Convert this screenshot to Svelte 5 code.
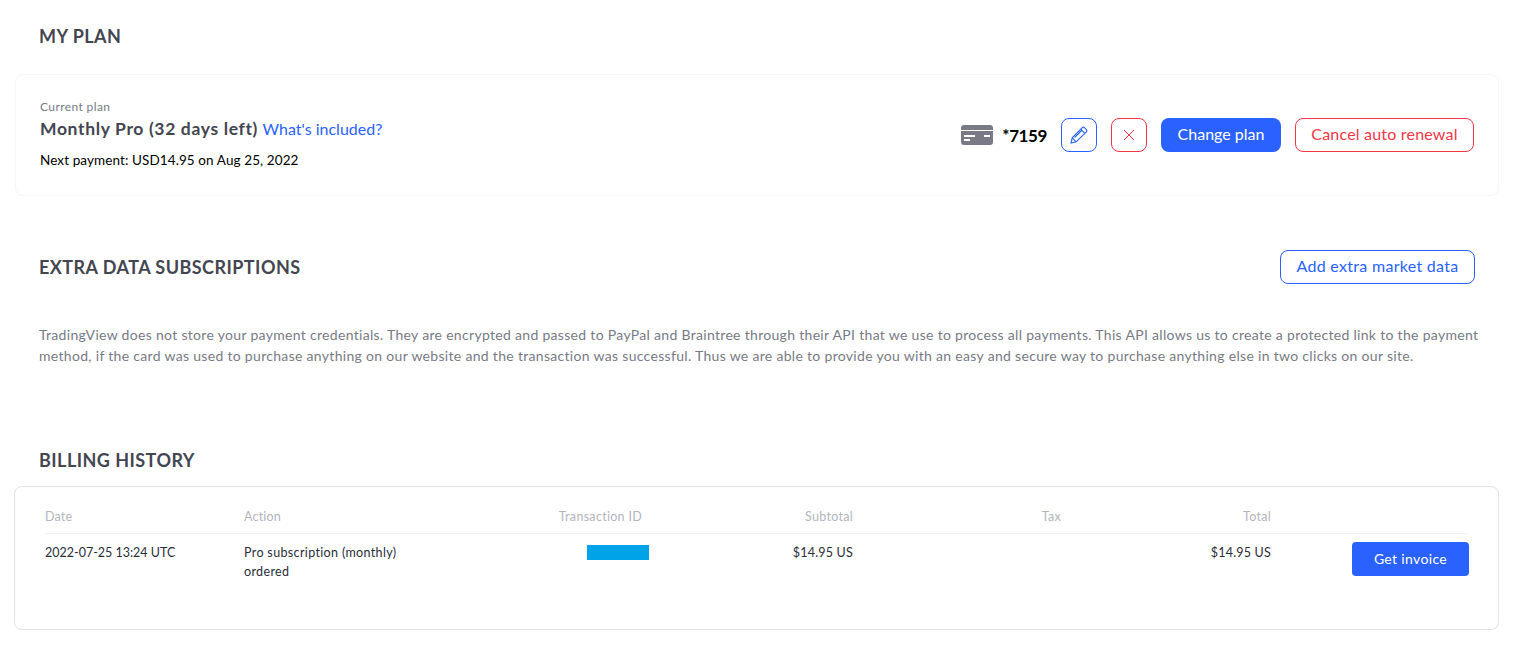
<script>
	const rows = [
		{
			date: '2022-07-25 13:24 UTC',
			action: 'Pro subscription (monthly) ordered',
			subtotal: '$14.95 US',
			tax: '',
			total: '$14.95 US'
		}
	];
</script>

<div class="page">
	<section class="plan">
		<h2 class="title plan-title">MY PLAN</h2>
		<div class="plan-card">
			<div class="plan-info">
				<p class="plan-label">Current plan</p>
				<p class="plan-name"><strong>Monthly Pro (32 days left)</strong> <a href="#included">What's included?</a></p>
				<p class="plan-next">Next payment: USD14.95 on Aug 25, 2022</p>
			</div>
			<div class="plan-actions">
				<svg class="card-icon" width="32" height="20" viewBox="0 0 32 20" aria-hidden="true">
					<path fill="#787b86" d="M3 0h26a3 3 0 0 1 3 3v2H0V3a3 3 0 0 1 3-3z"/>
					<path fill="#787b86" fill-rule="evenodd" d="M0 6h32v11a3 3 0 0 1-3 3H3a3 3 0 0 1-3-3zm3 4v2h11v-2zm20 0v2h6v-2zM3 14v2h6v-2z"/>
				</svg>
				<span class="card-number">*7159</span>
				<button class="square blue" aria-label="Edit">
					<svg width="20" height="20" viewBox="0 0 20 20" fill="none" stroke="currentColor" stroke-width="1.100" aria-hidden="true">
						<path d="M2 18l1.200-5.200L13.300 2.700a1.500 1.500 0 0 1 2.100 0l2 2a1.500 1.500 0 0 1 0 2.100L7.200 16.800z"/>
						<path d="M3.200 12.800l4 4M11.800 4.200l4.100 4.100M5.500 12.500l7.500-7.500"/>
					</svg>
				</button>
				<button class="square red" aria-label="Remove">
					<svg width="12" height="12" viewBox="0 0 12 12" fill="none" stroke="currentColor" stroke-width="1" aria-hidden="true">
						<path d="M1 1l10 10M11 1L1 11"/>
					</svg>
				</button>
				<button class="btn solid change">Change plan</button>
				<button class="btn outline-red cancel">Cancel auto renewal</button>
			</div>
		</div>
	</section>

	<section class="extra">
		<div class="extra-head">
			<h2 class="title">EXTRA DATA SUBSCRIPTIONS</h2>
			<button class="btn outline-blue add">Add extra market data</button>
		</div>
		<p class="note">TradingView does not store your payment credentials. They are encrypted and passed to PayPal and Braintree through their API that we use to process all payments. This API allows us to create a protected link to the payment method, if the card was used to purchase anything on our website and the transaction was successful. Thus we are able to provide you with an easy and secure way to purchase anything else in two clicks on our site.</p>
	</section>

	<section class="billing">
		<h2 class="title">BILLING HISTORY</h2>
		<div class="billing-card">
			<div class="grid head">
				<div>Date</div>
				<div>Action</div>
				<div class="right">Transaction ID</div>
				<div class="right">Subtotal</div>
				<div class="right">Tax</div>
				<div class="right">Total</div>
				<div></div>
			</div>
			{#each rows as row}
				<div class="grid row">
					<div class="date">{row.date}</div>
					<div class="action">{row.action}</div>
					<div class="right"><span class="redacted"></span></div>
					<div class="right">{row.subtotal}</div>
					<div class="right">{row.tax}</div>
					<div class="right">{row.total}</div>
					<div class="right"><button class="btn solid invoice">Get invoice</button></div>
				</div>
			{/each}
		</div>
	</section>
</div>

<style>
	:global(body) {
		background: #fff;
	}

	.page {
		width: 1525px;
		height: 651px;
		overflow: hidden;
		box-sizing: border-box;
		padding: 0 26px 0 14px;
		font-family: "Lato", "Open Sans", sans-serif;
		color: #131722;
	}

	h2,
	p {
		margin: 0;
	}

	.title {
		font-size: 18px;
		line-height: 24px;
		font-weight: 700;
		letter-spacing: 0.45px;
		color: #434651;
		padding-left: 25px;
	}

	.plan {
		padding-top: 24px;
	}

	.plan-title {
		margin-bottom: 26px;
	}

	.plan-card {
		margin-left: 1px;
		height: 122px;
		box-sizing: border-box;
		border: 1px solid #f5f5fa;
		border-radius: 8px;
		padding: 0 24px;
		display: flex;
		align-items: center;
		justify-content: space-between;
	}

	.plan-info {
		padding-top: 2px;
	}

	.plan-label {
		font-size: 12px;
		line-height: 16px;
		letter-spacing: 0.4px;
		color: #787b86;
		margin: -3px 0 2px;
	}

	.plan-name {
		font-size: 17.500px;
		line-height: 24px;
		color: #2962ff;
	}

	.plan-name strong {
		color: #434651;
		letter-spacing: 0.65px;
	}

	.plan-name a {
		color: #2962ff;
		text-decoration: none;
		font-size: 16px;
	}

	.plan-next {
		margin-top: 9px;
		font-size: 13.500px;
		line-height: 20px;
		letter-spacing: 0.1px;
		color: #000;
	}

	.plan-actions {
		display: flex;
		align-items: center;
	}

	.card-number {
		margin: 0 14px 0 9px;
		font-size: 17px;
		letter-spacing: -0.4px;
		font-weight: 700;
		color: #000;
	}

	button {
		font-family: inherit;
		background: #fff;
		padding: 0;
		cursor: pointer;
		box-sizing: border-box;
	}

	.square {
		width: 36px;
		height: 34px;
		border-radius: 8px;
		display: flex;
		align-items: center;
		justify-content: center;
		margin-right: 14px;
	}

	.square.blue {
		border: 1px solid #2962ff;
		color: #2962ff;
	}

	.square.red {
		border: 1px solid #f23645;
		color: #f23645;
	}

	.btn {
		height: 34px;
		padding-bottom: 4px;
		font-size: 16px;
		border-radius: 8px;
		border: 1px solid transparent;
	}

	.solid {
		background: #2962ff;
		color: #fff;
	}

	.outline-red {
		border-color: #f23645;
		color: #f23645;
	}

	.outline-blue {
		border-color: #2962ff;
		color: #2962ff;
	}

	.change {
		width: 120px;
		margin-right: 14px;
	}

	.cancel {
		width: 179px;
		letter-spacing: 0.2px;
	}

	.extra {
		margin-top: 54px;
	}

	.extra-head {
		display: flex;
		align-items: center;
		justify-content: space-between;
		padding-right: 24px;
	}

	.add {
		width: 195px;
		letter-spacing: 0.3px;
	}

	.note {
		margin-top: 40px;
		padding-left: 25px;
		width: 1445px;
		font-size: 14px;
		line-height: 21px;
		letter-spacing: 0.31px;
		color: #787b86;
	}

	.billing {
		margin-top: 82px;
	}

	.billing-card {
		margin-top: 14px;
		height: 144px;
		box-sizing: border-box;
		border: 1px solid #e0e3eb;
		border-radius: 8px;
		padding: 0 30px;
	}

	.grid {
		display: grid;
		grid-template-columns: 199px 199px 199px 211px 208px 210px 198px;
		font-size: 12.500px;
		letter-spacing: 0.2px;
	}

	.head {
		height: 47px;
		padding-bottom: 8px;
		box-sizing: border-box;
		align-items: end;
		line-height: 16px;
		border-bottom: 1px solid #f0f3fa;
		color: #b2b5be;
	}

	.head .right {
		letter-spacing: 0.3px;
	}

	.row {
		padding-top: 8px;
		line-height: 19px;
		color: #2a2e39;
	}

	.row > div {
		padding-top: 1px;
	}

	.row > div:last-child {
		padding-top: 0;
	}

	.row > div:nth-child(3) {
		padding-top: 3px;
	}

	.date {
		letter-spacing: 0;
	}

	.right {
		text-align: right;
	}

	.action {
		width: 170px;
		letter-spacing: 0.35px;
	}

	.redacted {
		display: inline-block;
		width: 62px;
		height: 15px;
		background: #00a2e8;
		margin-right: -7px;
	}

	.invoice {
		width: 117px;
		height: 34px;
		padding-bottom: 2px;
		font-size: 14px;
		letter-spacing: 0.35px;
		border-radius: 4px;
	}
</style>
